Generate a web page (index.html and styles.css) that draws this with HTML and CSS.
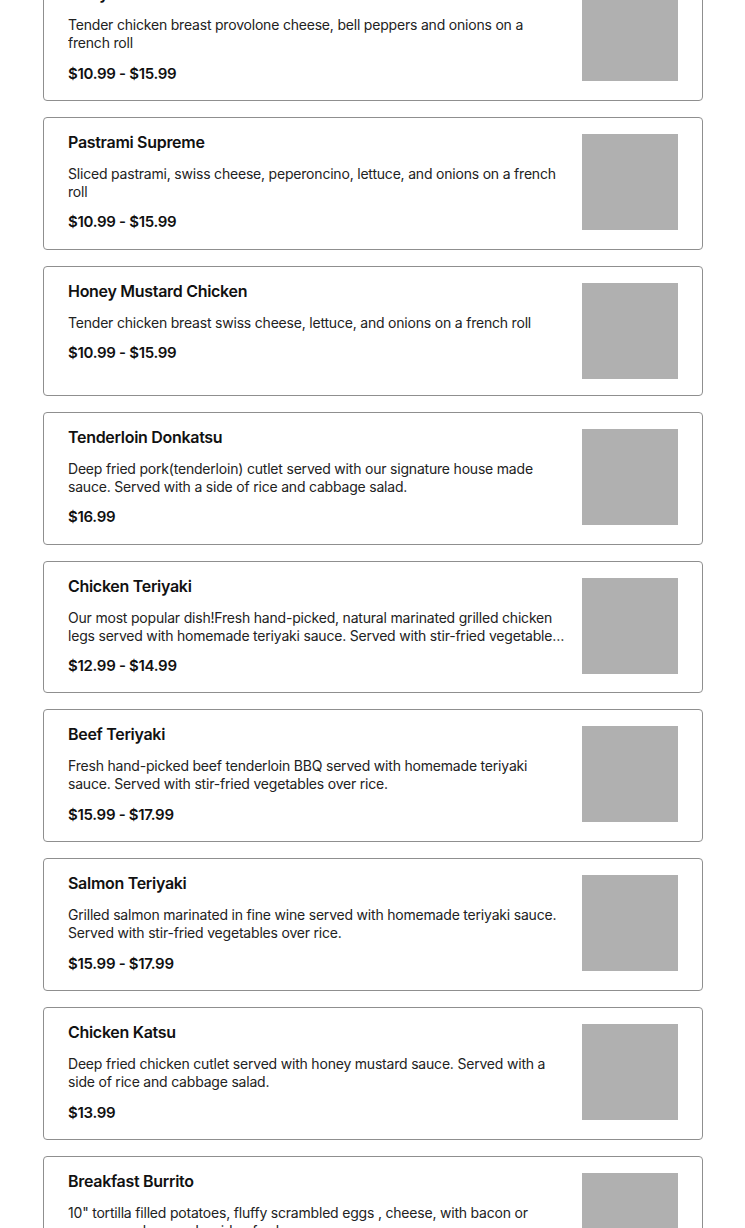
FILE: index.html
```html
<!DOCTYPE html>
<html lang="en">
<head>
<meta charset="utf-8">
<title>Menu</title>
<link rel="stylesheet" href="styles.css">
</head>
<body>
<main class="menu">
  <article class="item">
    <div class="info">
      <h3 class="name">Philly Cheese Steak</h3>
      <p class="desc">Tender chicken breast provolone cheese, bell peppers and onions on a french roll</p>
      <p class="price">$10.99 - $15.99</p>
    </div>
    <div class="thumb"></div>
  </article>
  <article class="item">
    <div class="info">
      <h3 class="name">Pastrami Supreme</h3>
      <p class="desc">Sliced pastrami, swiss cheese, peperoncino, lettuce, and onions on a french roll</p>
      <p class="price">$10.99 - $15.99</p>
    </div>
    <div class="thumb"></div>
  </article>
  <article class="item">
    <div class="info">
      <h3 class="name">Honey Mustard Chicken</h3>
      <p class="desc">Tender chicken breast swiss cheese, lettuce, and onions on a french roll</p>
      <p class="price">$10.99 - $15.99</p>
    </div>
    <div class="thumb"></div>
  </article>
  <article class="item">
    <div class="info">
      <h3 class="name">Tenderloin Donkatsu</h3>
      <p class="desc">Deep fried pork(tenderloin) cutlet served with our signature house made sauce. Served with a side of rice and cabbage salad.</p>
      <p class="price">$16.99</p>
    </div>
    <div class="thumb"></div>
  </article>
  <article class="item">
    <div class="info">
      <h3 class="name">Chicken Teriyaki</h3>
      <p class="desc">Our most popular dish!Fresh hand-picked, natural marinated grilled chicken legs served with homemade teriyaki sauce. Served with stir-fried vegetables over rice.</p>
      <p class="price">$12.99 - $14.99</p>
    </div>
    <div class="thumb"></div>
  </article>
  <article class="item">
    <div class="info">
      <h3 class="name">Beef Teriyaki</h3>
      <p class="desc">Fresh hand-picked beef tenderloin BBQ served with homemade teriyaki sauce. Served with stir-fried vegetables over rice.</p>
      <p class="price">$15.99 - $17.99</p>
    </div>
    <div class="thumb"></div>
  </article>
  <article class="item">
    <div class="info">
      <h3 class="name">Salmon Teriyaki</h3>
      <p class="desc">Grilled salmon marinated in fine wine served with homemade teriyaki sauce. Served with stir-fried vegetables over rice.</p>
      <p class="price">$15.99 - $17.99</p>
    </div>
    <div class="thumb"></div>
  </article>
  <article class="item">
    <div class="info">
      <h3 class="name">Chicken Katsu</h3>
      <p class="desc">Deep fried chicken cutlet served with honey mustard sauce. Served with a side of rice and cabbage salad.</p>
      <p class="price">$13.99</p>
    </div>
    <div class="thumb"></div>
  </article>
  <article class="item">
    <div class="info">
      <h3 class="name">Breakfast Burrito</h3>
      <p class="desc">10" tortilla filled potatoes, fluffy scrambled eggs , cheese, with bacon or sausage or ham and a side of salsa.</p>
      <p class="price">$10.99</p>
    </div>
    <div class="thumb"></div>
  </article>
</main>
</body>
</html>
```

FILE: styles.css
```css
html, body {
  margin: 0;
  padding: 0;
  background: #ffffff;
}

body {
  font-family: Inter, "Liberation Sans", sans-serif;
  color: #111111;
  overflow: hidden;
}

.menu {
  width: 660px;
  margin: -32px 0 0 43px;
  display: flex;
  flex-direction: column;
  gap: 16px;
}

.item {
  display: flex;
  align-items: flex-start;
  gap: 16px;
  padding: 16px 24px;
  border: 1px solid #8f8f8f;
  border-radius: 4px;
}

.info {
  flex: 1;
  min-width: 0;
}

.name {
  margin: 0;
  font-size: 16px;
  line-height: 16px;
  font-weight: 600;
  letter-spacing: -0.3px;
  color: #111111;
}

.desc {
  margin: 15px 0 0;
  font-size: 14px;
  line-height: 18px;
  letter-spacing: -0.2px;
  color: #222222;
  display: -webkit-box;
  -webkit-line-clamp: 2;
  -webkit-box-orient: vertical;
  overflow: hidden;
}

.price {
  margin: 11.5px 0 0;
  font-size: 15px;
  line-height: 20.35px;
  font-weight: 600;
  letter-spacing: -0.3px;
  color: #111111;
}

.thumb {
  flex: none;
  width: 96px;
  height: 96px;
  background: #b0b0b0;
}
```
